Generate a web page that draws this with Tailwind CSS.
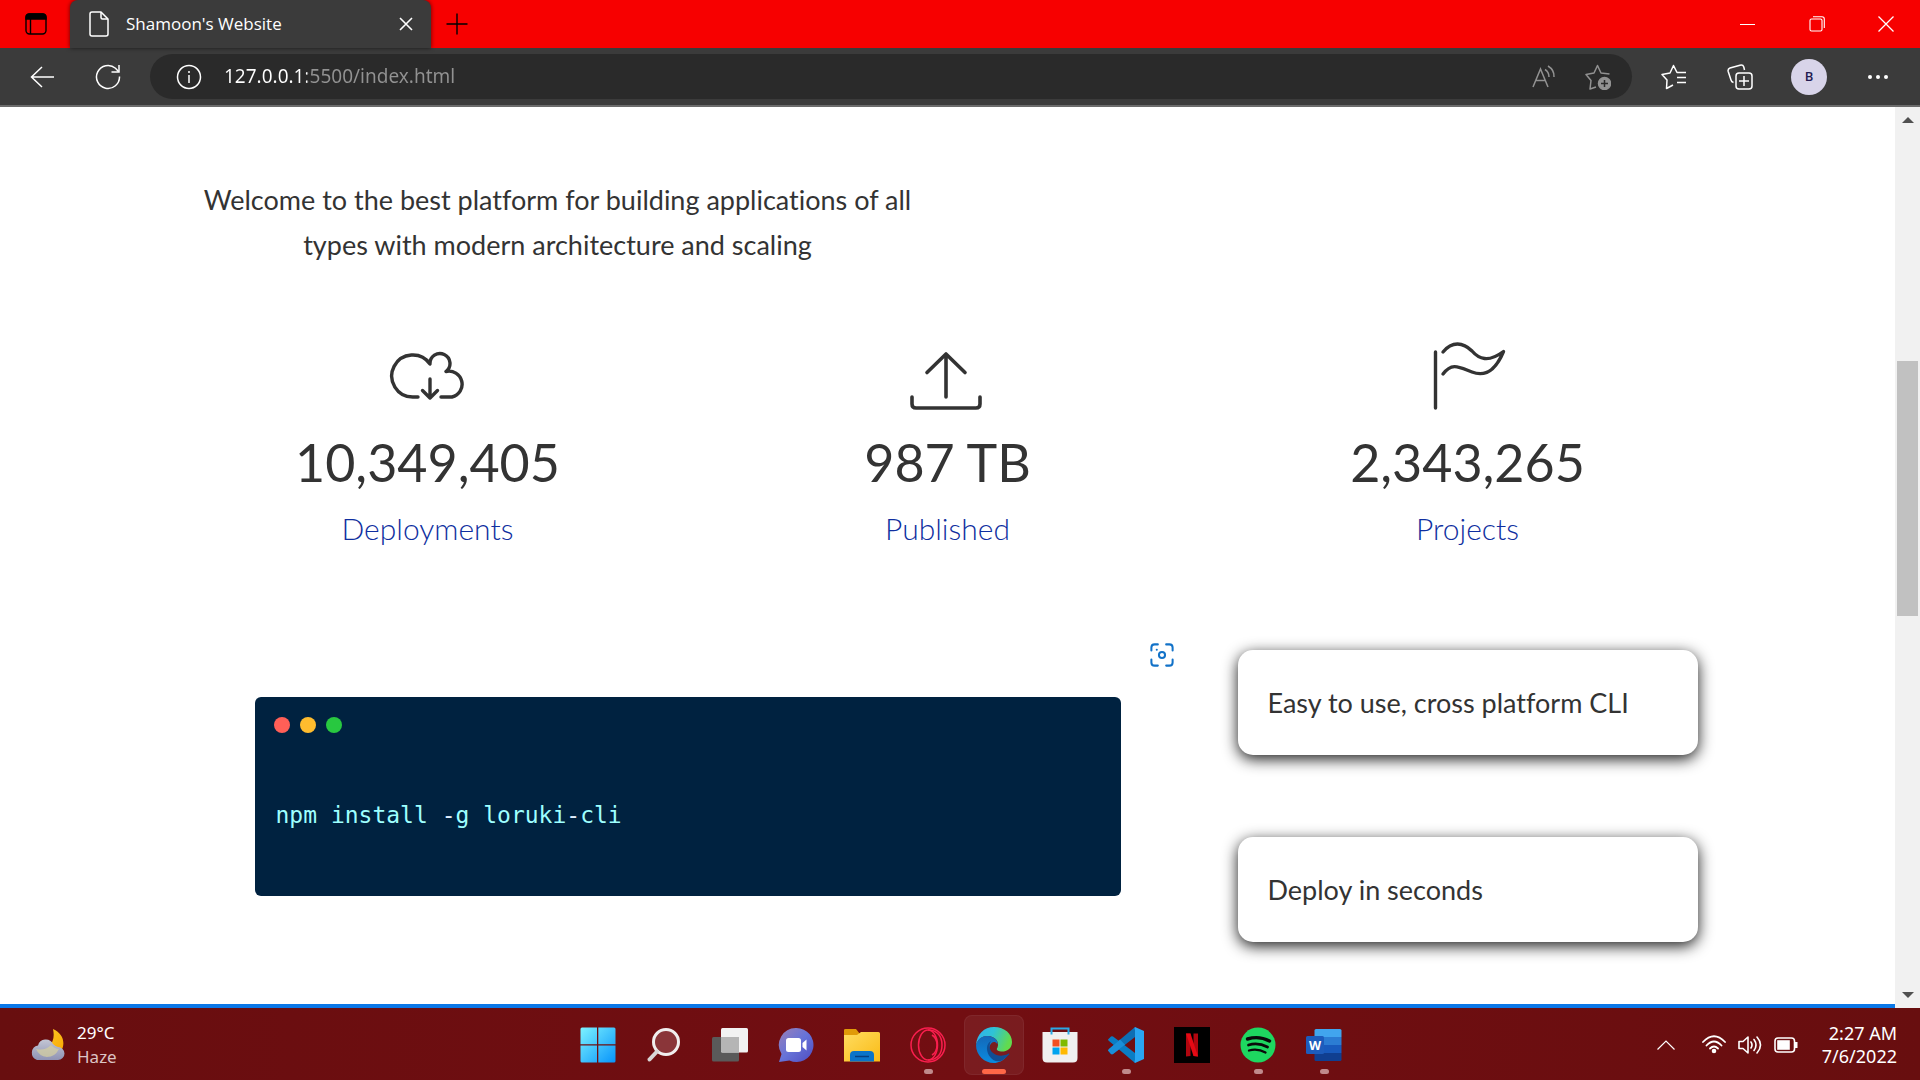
<!DOCTYPE html>
<html lang="en">
<head>
<meta charset="utf-8">
<title>Shamoon's Website</title>
<script src="https://cdn.jsdelivr.net/npm/@tailwindcss/browser@4"></script>
</head>
<body class="flex min-h-screen flex-col bg-white font-['Open_Sans','Noto_Sans',sans-serif]">

<!-- Tab strip -->
<header class="flex flex-col">
  <div class="flex h-12 items-center bg-[#f70000] text-white">
    <button aria-label="Tab actions" class="flex h-12 w-[70px] items-center justify-center pl-[2px]">
      <svg class="size-[22px]" viewBox="0 0 22 22" fill="none" stroke="#000" stroke-width="1.4"><rect x="1" y="1" width="20" height="20" rx="3.5"/><path d="M1 6V4.500Q1 1 4.500 1H17.500Q21 1 21 4.500V6Z" fill="#000"/><path d="M5.500 6V21"/></svg>
    </button>
    <div class="relative flex h-12 w-[361px] items-center rounded-t-lg bg-[#3b3b3b] pr-[11px] pl-[19px] shadow-[0_0_4px_rgba(0,0,0,0.6)]">
      <svg class="mr-[17px] h-[26px] w-5" viewBox="0 0 20 26" fill="none" stroke="#fff" stroke-width="1.5" stroke-linejoin="round"><path d="M1 3Q1 1 3 1H12L19 8V23Q19 25 17 25H3Q1 25 1 23Z"/><path d="M12 1V6.500Q12 8 13.500 8H19"/></svg>
      <span class="flex-1 text-[17px] leading-6">Shamoon's Website</span>
      <button aria-label="Close tab" class="flex size-7 items-center justify-center">
        <svg class="size-[14px]" viewBox="0 0 14 14" stroke="#fff" stroke-width="1.6"><path d="M1 1 13 13M13 1 1 13"/></svg>
      </button>
    </div>
    <button aria-label="New tab" class="flex h-12 w-[52px] items-center justify-center">
      <svg class="size-[22px]" viewBox="0 0 22 22" stroke="#000" stroke-width="1.4"><path d="M11 0.500V21.500M0.500 11H21.500"/></svg>
    </button>
    <div class="ml-auto flex">
      <button aria-label="Minimize" class="flex h-12 w-[69px] items-center justify-center"><svg class="size-[15px]" viewBox="0 0 15 15" stroke="#fff"><path d="M0 7.500H15"/></svg></button>
      <button aria-label="Restore" class="flex h-12 w-[69px] items-center justify-center"><svg class="size-4" viewBox="0 0 16 16" fill="none" stroke="#fff" stroke-width="1.1"><rect x="1" y="3" width="12" height="12" rx="1.500"/><path d="M4 .8H13Q15.300 .8 15.300 3V12"/></svg></button>
      <button aria-label="Close window" class="flex h-12 w-[69px] items-center justify-center"><svg class="size-4" viewBox="0 0 16 16" stroke="#fff" stroke-width="1.300"><path d="M.5 .5 15.500 15.500M15.500 .5 .5 15.500"/></svg></button>
    </div>
  </div>

  <!-- Toolbar -->
  <div class="flex h-[59px] items-center border-b-2 border-[#6b6b6b] bg-[#3b3b3b] text-white">
    <button aria-label="Back" class="ml-[9px] flex size-[66px] items-center justify-center"><svg class="h-[22px] w-6" viewBox="0 0 24 22" fill="none" stroke="#fff" stroke-width="1.500"><path d="M12 1 1.500 11 12 21M1.500 11H24"/></svg></button>
    <button aria-label="Refresh" class="flex size-[66px] items-center justify-center"><svg class="size-[26px]" viewBox="0 0 26 26" fill="none" stroke="#fff" stroke-width="1.500"><path d="M24.500 12.500A11.500 11.500 0 1 1 20.500 4.200L23.500 7.500"/><path d="M24 1V8H16.500"/></svg></button>
    <div class="ml-[9px] flex h-[45px] flex-1 items-center rounded-full bg-[#2a2a2a]">
      <svg class="ml-[26px] size-[26px]" viewBox="0 0 26 26" fill="none" stroke="#fff" stroke-width="1.500"><circle cx="13" cy="13" r="11.500"/><path d="M13 11V19M13 7V9"/></svg>
      <input aria-label="Address" type="text" value="127.0.0.1:5500/index.html" class="mx-[22px] h-8 flex-1 bg-[linear-gradient(90deg,#fff_83px,#929292_83px)] bg-clip-text pb-[2px] font-['Noto_Sans',sans-serif] text-[19px] text-transparent outline-none">
      <button aria-label="Read aloud" class="flex h-10 w-[54px] items-center justify-center"><svg class="h-6 w-[26px]" viewBox="0 0 26 24" fill="none" stroke="#929292" stroke-width="1.500"><path d="M2 22 9.500 4 17 22M5 15.500H14"/><path d="M14 4.500Q18 7 18 12M17 1Q23.500 5 23 12"/></svg></button>
      <button aria-label="Add to favorites" class="mr-[7px] flex h-10 w-[54px] items-center justify-center"><svg class="size-[26px]" viewBox="0 0 26 26" fill="none" stroke="#929292" stroke-width="1.500" stroke-linejoin="round"><path d="M11 23 5 25 6 16.500 1 10.500 9 9 12.500 1.500 16 9 24.500 10"/><circle cx="19.500" cy="19.500" r="6" fill="#929292"/><path d="M19.500 16V23M16 19.500H23" stroke="#2a2a2a"/></svg></button>
    </div>
    <button aria-label="Favorites" class="ml-[9px] flex h-10 w-[66px] items-center justify-center"><svg class="size-[26px]" viewBox="0 0 26 26" fill="none" stroke="#fff" stroke-width="1.500" stroke-linejoin="round"><path d="M12 21 5.500 24.500 6 16 1 10.500 9 9 12.500 1.500 16 8.500H25M16 13.500H25M16 18.500H25"/></svg></button>
    <button aria-label="Collections" class="flex h-10 w-[66px] items-center justify-center"><svg class="size-[26px]" viewBox="0 0 26 26" fill="none" stroke="#fff" stroke-width="1.500"><path d="M6.500 18.500Q4.500 18 4 16L1.200 7.500Q.5 5 3 4L13 1.200Q16 .5 16.800 3L17.500 6"/><rect x="9" y="9" width="16" height="16" rx="3"/><path d="M17 12V22M12 17H22"/></svg></button>
    <button aria-label="Profile" class="mx-[18px] flex size-9 items-center justify-center rounded-full bg-[#d8d4e9] text-[13px] font-semibold text-[#231b50]">B</button>
    <button aria-label="Settings and more" class="mr-[9px] flex h-10 w-[66px] items-center justify-center"><svg class="h-1 w-5" viewBox="0 0 20 4" fill="#fff"><circle cx="2" cy="2" r="2"/><circle cx="10" cy="2" r="2"/><circle cx="18" cy="2" r="2"/></svg></button>
  </div>
</header>

<!-- Viewport -->
<div class="flex flex-1">
  <main class="flex-1 border-b-4 border-[#0a78e8] font-['Lato',sans-serif] text-[#333] [font-variant-ligatures:no-common-ligatures]">
    <div class="mx-auto max-w-[1560px] pt-[70px]">
      <div class="w-1/2">
        <p class="mx-auto max-w-[730px] text-center text-[27px] leading-[45px]">Welcome to the best platform for building applications of all types with modern architecture and scaling</p>
      </div>

      <section class="mt-[69px] grid grid-cols-3 text-center">
        <div class="flex flex-col items-center">
          <svg class="size-20" viewBox="0 0 80 80" fill="none" stroke="#333" stroke-width="3.400" stroke-linecap="round" stroke-linejoin="round"><path d="M30 61H25A21 21 0 1 1 42 28A10 10 0 1 1 58 35.500A13 13 0 1 1 64 61H53"/><path d="M42 43V62M34.500 54.500 42 62 49.500 54.500"/></svg>
          <h3 class="mt-[13px] text-[52px] leading-[66px]">10,349,405</h3>
          <p class="mt-[9px] text-[30px] leading-[48px] font-light text-[#0f2fa0]">Deployments</p>
        </div>
        <div class="flex flex-col items-center">
          <svg class="size-20" viewBox="0 0 80 80" fill="none" stroke="#333" stroke-width="3.600" stroke-linecap="round" stroke-linejoin="round"><path d="M38 18V61M19 36.500 38 18 57 36.500"/><path d="M4 61V68Q4 72 8 72H68Q72 72 72 68V61"/></svg>
          <h3 class="mt-[13px] text-[52px] leading-[66px]">987 TB</h3>
          <p class="mt-[9px] text-[30px] leading-[48px] font-light text-[#0f2fa0]">Published</p>
        </div>
        <div class="flex flex-col items-center">
          <svg class="size-20" viewBox="0 0 80 80" fill="none" stroke="#333" stroke-width="3.400" stroke-linecap="round" stroke-linejoin="round"><path d="M7.500 16V72"/><path d="M15 16C24 5 35 6 44 15C51 23 60 27 75.500 15.500C69 31 60 42 44 36C31 31 24 26 15 38"/></svg>
          <h3 class="mt-[13px] text-[52px] leading-[66px]">2,343,265</h3>
          <p class="mt-[9px] text-[30px] leading-[48px] font-light text-[#0f2fa0]">Projects</p>
        </div>
      </section>

      <section class="mt-[98px] flex items-center gap-[117px] pr-[30px] pb-[61px] pl-[87px]">
        <div class="relative h-[199px] flex-1 rounded-md bg-[#002240] px-[19px] pt-5">
          <div class="flex gap-[10px]">
            <span class="size-4 rounded-full bg-[#ff5f57]"></span>
            <span class="size-4 rounded-full bg-[#febc2e]"></span>
            <span class="size-4 rounded-full bg-[#28c840]"></span>
          </div>
          <code class="mt-[66px] block pl-[2px] font-['DejaVu_Sans_Mono',monospace] text-[23px] leading-8 text-[#9effff]">npm install <span class="text-[#e1efff]">-</span>g loruki<span class="text-[#e1efff]">-</span>cli</code>
          <button aria-label="Visual search" class="absolute -top-[54px] -right-[53px]">
            <svg class="size-6" viewBox="0 0 26 26" fill="none" stroke="#1272c8" stroke-width="2.200" stroke-linecap="round"><path d="M1.500 8V5Q1.500 1.500 5 1.500H8.500M17.500 1.500H21Q24.500 1.500 24.500 5V8M24.500 18V21Q24.500 24.500 21 24.500H17.500M8.500 24.500H5Q1.500 24.500 1.500 21V18"/><circle cx="13" cy="13" r="3.300"/><path d="M7.300 7.300H7.400"/></svg>
          </button>
        </div>
        <div class="flex w-[460px] flex-col gap-[82px]">
          <div class="rounded-[15px] bg-white p-[30px] text-[27px] leading-[45px] shadow-[0_4px_15px_rgba(0,0,0,0.9)]">Easy to use, cross platform CLI</div>
          <div class="rounded-[15px] bg-white p-[30px] text-[27px] leading-[45px] shadow-[0_4px_15px_rgba(0,0,0,0.9)]">Deploy in seconds</div>
        </div>
      </section>
    </div>
  </main>
  <div class="flex w-[25px] flex-col items-center justify-between bg-[#f1f1f1]">
    <button aria-label="Scroll up" class="flex h-[26px] w-full items-center justify-center"><svg class="h-[6px] w-3" viewBox="0 0 12 6" fill="#505050"><path d="M6 0 12 6H0Z"/></svg></button>
    <div class="flex w-full flex-1 flex-col px-[2px] pt-[228px]"><div class="h-[255px] bg-[#c1c1c1]"></div></div>
    <button aria-label="Scroll down" class="flex h-[26px] w-full items-center justify-center"><svg class="h-[6px] w-3" viewBox="0 0 12 6" fill="#505050"><path d="M0 0H12L6 6Z"/></svg></button>
  </div>
</div>

<!-- Taskbar -->
<footer class="grid h-[72px] grid-cols-[1fr_auto_1fr] items-center bg-linear-to-r from-[#680e0f] via-[#720e12] to-[#680e0f] pt-[2px] text-white">
  <div class="flex items-center gap-[12px] pl-[29px]">
    <svg class="h-9 w-9" viewBox="0 0 36 36"><defs><linearGradient id="moon" x1="0" y1="0" x2="1" y2="1"><stop offset="0" stop-color="#ffd02c"/><stop offset="1" stop-color="#f9a400"/></linearGradient><linearGradient id="cloud" x1="0" y1="0" x2="0" y2="1"><stop offset="0" stop-color="#c3c6d4"/><stop offset="1" stop-color="#8f93b4"/></linearGradient></defs><path d="M24 2C38 8 37 24 26 29C19 32 10 29 6 23C20 24 27 15 24 2Z" fill="url(#moon)"/><path d="M8 33A7.500 7.500 0 0 1 9 18.500A8 8 0 0 1 24 17Q27 20 29 20A6.500 6.500 0 0 1 29 33Z" fill="url(#cloud)"/><path d="M7 22Q16 24 22 18Q26 22 30 22Q26 30 18 30Q10 29 7 22Z" fill="#d3cda2" opacity=".75"/></svg>
    <div class="font-['Noto_Sans',sans-serif] text-[17px] leading-6"><p>29°C</p><p class="text-[#dcc4c4]">Haze</p></div>
  </div>

  <nav aria-label="Taskbar" class="flex gap-[6px] pl-[2px]">
    <button aria-label="Start" class="flex size-[60px] items-center justify-center"><svg class="size-9" viewBox="0 0 36 36"><defs><linearGradient id="win" x1="0" y1="0" x2="1" y2="1"><stop offset="0" stop-color="#7df3ff"/><stop offset="1" stop-color="#0794fb"/></linearGradient></defs><path fill="url(#win)" d="M2 .5H17V17.300H.5V2Q.5 .5 2 .5ZM18.300 .5H34Q35.500 .5 35.500 2V17.300H18.300ZM.5 18.600H17V35.500H2Q.5 35.500 .5 34ZM18.300 18.600H35.500V34Q35.500 35.500 34 35.500H18.300Z"/></svg></button>
    <button aria-label="Search" class="flex size-[60px] items-center justify-center"><svg class="size-9" viewBox="0 0 36 36"><circle cx="20" cy="15" r="12.500" fill="#8a3539" stroke="#f1eeee" stroke-width="3"/><path d="M11 24.500 3.500 32.500" stroke="#d9d6d6" stroke-width="4" stroke-linecap="round"/></svg></button>
    <button aria-label="Task view" class="flex size-[60px] items-center justify-center"><svg class="size-9" viewBox="0 0 36 36"><rect y="10" width="27" height="24.500" rx="1.500" fill="#5a5a5a"/><rect x="9" y="1" width="27" height="24.500" rx="1.500" fill="#f2f2f2"/><path d="M9 10H27V25.500H10.500Q9 25.500 9 24Z" fill="#b5b5b5"/></svg></button>
    <button aria-label="Chat" class="flex size-[60px] items-center justify-center"><svg class="size-9" viewBox="0 0 36 36"><defs><linearGradient id="chat" x1="0" y1="0" x2="1" y2="1"><stop offset="0" stop-color="#9a80b8"/><stop offset=".5" stop-color="#6673d8"/><stop offset="1" stop-color="#4f4bc0"/></linearGradient></defs><path d="M18.500 1A17 17 0 1 1 11.500 33.500L1 35 3.500 27A17 17 0 0 1 18.500 1Z" fill="url(#chat)"/><rect x="8" y="11" width="15" height="14" rx="2.500" fill="#fff"/><path d="M24.500 16 28.500 12.500V23.500L24.500 20Z" fill="#fff"/></svg></button>
    <button aria-label="File Explorer" class="flex size-[60px] items-center justify-center"><svg class="size-9" viewBox="0 0 36 36"><defs><linearGradient id="fold" x1="0" y1="0" x2="1" y2="1"><stop offset="0" stop-color="#ffdc60"/><stop offset="1" stop-color="#fabb16"/></linearGradient></defs><path d="M0 12V3Q0 2 1.500 2H12L16 7V12Z" fill="#e09a08"/><path d="M0 8H13L17 5H34.500Q36 5 36 6.500V34.500H0Z" fill="url(#fold)"/><path d="M6 34.500V28Q6 24 10 24H26Q30 24 30 28V34.500Z" fill="#0a74c9"/><path d="M11 29.500H25" stroke="#063f80" stroke-width="1.500"/></svg></button>
    <button aria-label="Opera" class="relative flex size-[60px] items-center justify-center"><svg class="size-9" viewBox="0 0 36 36" fill="none" stroke="#fa1e4e" stroke-width="1.500"><circle cx="18" cy="18" r="17"/><ellipse cx="18" cy="18" rx="9.500" ry="15"/><path d="M18 3C28 3 32 10 32 18S28 33 18 33M22 8Q27 11 27 18T22 28"/></svg><i class="absolute bottom-[1px] h-[5px] w-[9px] rounded-full bg-[#c08a8c]"></i></button>
    <button aria-label="Microsoft Edge" class="relative flex size-[60px] items-center justify-center rounded-lg border border-white/5 bg-white/6"><svg class="size-9" viewBox="0 0 36 36"><defs><linearGradient id="e1" x1="0" y1="0" x2="1" y2=".3"><stop offset="0" stop-color="#30aef0"/><stop offset=".5" stop-color="#2fc2d6"/><stop offset="1" stop-color="#62db4e"/></linearGradient><linearGradient id="e2" x1="0" y1="0" x2="0" y2="1"><stop offset="0" stop-color="#1468b8"/><stop offset="1" stop-color="#0a8be0"/></linearGradient></defs><path d="M0 18C1 7 8 0 18 0C29 0 36 7 36 15C36 22 30 25 25 24.500C21 24 20 22.500 21.500 20.500C24 14 18 9 12 9C6 9 2 12 0 18Z" fill="url(#e1)"/><path d="M0 18C2 11 7 8.500 12 9C18 9.500 22 13 21.500 17C17 11 11 19 14 26C17 33 25 34 31 29C27 34 22 36 18 36C8 36 0 28 0 18Z" fill="url(#e2)"/><path d="M15 14C10 17 10 23 13 28.500C17 35 24 36 28 32Q31 30 33.500 27Q32.500 26 31 27.500C22 31 13.500 26 13.500 19Q13.500 16 15 14Z" fill="#114e94"/></svg><i class="absolute bottom-0 h-[5px] w-6 rounded-full bg-[#ff6747]"></i></button>
    <button aria-label="Microsoft Store" class="flex size-[60px] items-center justify-center"><svg class="size-9" viewBox="0 0 36 36"><path d="M.5 5H35.500V31Q35.500 35.500 31 35.500H5Q.5 35.500 .5 31Z" fill="#f0f0f0"/><path d="M9.500 7.500V1.500H26.500V7.500" fill="none" stroke="#2ba9e5" stroke-width="2"/><path d="M10.500 12.500H17.500V19.500H10.500Z" fill="#f25022"/><path d="M18.500 12.500H25.500V19.500H18.500Z" fill="#7fba00"/><path d="M10.500 20.500H17.500V27.500H10.500Z" fill="#00a4ef"/><path d="M18.500 20.500H25.500V27.500H18.500Z" fill="#ffb900"/></svg></button>
    <button aria-label="Visual Studio Code" class="relative flex size-[60px] items-center justify-center"><svg class="size-9" viewBox="0 0 36 36"><path d="M0 12.500 3 9.500Q4 9 5 9.500L29 27.500 27 36 1 14Q0 13 0 12.500Z" fill="#0a7dc4"/><path d="M0 23.500 3 27Q4 27.500 5 27L29 8.500 27 0 1 22Q0 23 0 23.500Z" fill="#0e6fb4"/><path d="M0 23.500 3 27Q4 27.500 5 27L17 17.700 12 12.500 1 22Z" fill="#1a8fd8"/><path d="M27 0 36 4V32L27 36Q26 35 27 33V3Q26 1 27 0Z" fill="#2aa6f2"/></svg><i class="absolute bottom-[1px] h-[5px] w-[9px] rounded-full bg-[#c08a8c]"></i></button>
    <button aria-label="Netflix" class="flex size-[60px] items-center justify-center"><svg class="size-9" viewBox="0 0 36 36"><path fill="#000" d="M0 0H36V36H0Z"/><path fill="#b1060f" d="M12 6.500H16.500V29L12 29.500ZM19.500 6.500H24V29.500L19.500 29Z"/><path fill="#e50914" d="M12 6.500H16.500L24 29.500 19.500 29Z"/></svg></button>
    <button aria-label="Spotify" class="relative flex size-[60px] items-center justify-center"><svg class="size-9" viewBox="0 0 36 36" fill="none" stroke="#0a0a0a" stroke-linecap="round"><circle cx="18" cy="18" r="17.500" fill="#1ed760" stroke="none"/><path d="M7.500 12Q19 8.500 29.500 14" stroke-width="3.400"/><path d="M8.500 18Q18 15 27.500 20" stroke-width="2.800"/><path d="M9 23.500Q17.500 21 25.500 25.500" stroke-width="2.300"/></svg><i class="absolute bottom-[1px] h-[5px] w-[9px] rounded-full bg-[#c08a8c]"></i></button>
    <button aria-label="Word" class="relative flex size-[60px] items-center justify-center"><svg class="size-9" viewBox="0 0 36 36"><path d="M8.500 10V3.500Q8.500 2 10 2H34Q35.500 2 35.500 3.500V10Z" fill="#41a5ee"/><path d="M8.500 10H35.500V18H8.500Z" fill="#2b7cd3"/><path d="M8.500 18H35.500V26H8.500Z" fill="#185abd"/><path d="M8.500 26H35.500V32.500Q35.500 34 34 34H10Q8.500 34 8.500 32.500Z" fill="#103f91"/><rect y="9" width="18" height="18" rx="1.500" fill="#1d5cbc"/><text x="9" y="22.500" text-anchor="middle" font-family="Open Sans" font-weight="700" font-size="12.500" fill="#fff">W</text></svg><i class="absolute bottom-[1px] h-[5px] w-[9px] rounded-full bg-[#c08a8c]"></i></button>
  </nav>

  <div class="flex items-center justify-end pr-[23px]">
    <button aria-label="Show hidden icons" class="mr-[27px]"><svg class="h-[10px] w-[18px]" viewBox="0 0 18 10" fill="none" stroke="#fff" stroke-width="1.200"><path d="M.5 9.500 9 1 17.500 9.500"/></svg></button>
    <button aria-label="Network, volume and battery" class="mr-6 flex gap-3">
      <svg class="h-[22px] w-6" viewBox="0 0 24 22" fill="none" stroke="#fff" stroke-width="1.800" stroke-linecap="round"><path d="M1 8Q12-3.500 23 8M4.500 11.500Q12 3.500 19.500 11.500M8 14.500Q12 10.500 16 14.500"/><circle cx="12" cy="17" r="1.400" fill="#fff"/></svg>
      <svg class="h-[22px] w-6" viewBox="0 0 24 22" fill="none" stroke="#fff" stroke-width="1.600" stroke-linejoin="round" stroke-linecap="round"><path d="M1 7.500H5L10 3V19L5 14.500H1ZM13 8Q15 11 13 14M16 5.500Q20 11 16 16.500M19 3Q26 11 19 19"/></svg>
      <svg class="h-[22px] w-6" viewBox="0 0 24 22" fill="none" stroke="#fff" stroke-width="1.600"><rect x="1" y="4" width="19.500" height="14" rx="3"/><rect x="4" y="7" width="11" height="8" fill="#fff"/><path d="M22 8V14" stroke-width="3"/></svg>
    </button>
    <div class="text-right font-['Noto_Sans',sans-serif] text-[18px] leading-[23px]"><p>2:27 AM</p><p>7/6/2022</p></div>
  </div>
</footer>
</body>
</html>
